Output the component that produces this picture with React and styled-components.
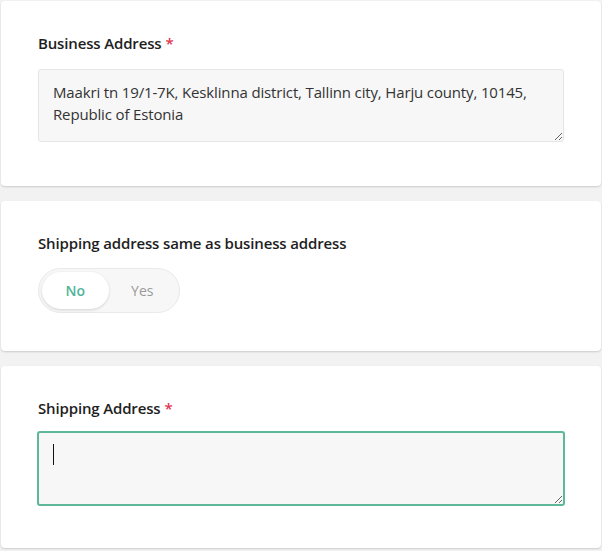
import styled, {createGlobalStyle} from "styled-components";
import {useState} from "react";

const GlobalStyle = createGlobalStyle`
  html, body {
    margin: 0;
    background: #f2f2f2;
  }
  body {
    font-family: "Open Sans", "Noto Sans", sans-serif;
    color: #222;
  }
`;

const Page = styled.div`
  display: flex;
  flex-direction: column;
  gap: 15px;
  padding: 1px 1px 2px 1px;
`;

const Card = styled.section`
  background: #fff;
  border-radius: 4px;
  box-shadow: 0 1px 2px rgba(0, 0, 0, 0.16);
  padding: ${p => p.$pad || "32px 37px 44px 37px"};
`;

const Label = styled.div`
  font-size: 15px;
  font-weight: 600;
  line-height: 20px;
  letter-spacing: -0.15px;
  color: #1e1e1e;
  margin-bottom: ${p => p.$gap || "16px"};
`;

const Star = styled.span`
  color: #e0344f;
  margin-left: 4px;
`;

const Field = styled.div`
  position: relative;
`;

const TextArea = styled.textarea`
  display: block;
  box-sizing: border-box;
  height: ${p => (p.$focused ? "75px" : "73px")};
  margin: ${p => (p.$focused ? "0 -1px" : "0")};
  width: ${p => (p.$focused ? "calc(100% + 2px)" : "100%")};
  background: #f7f7f7;
  border: ${p => (p.$focused ? "2px solid #5cb899" : "1px solid #e5e5e5")};
  border-radius: 3px;
  padding: ${p => (p.$focused ? "10px 14px" : "11px 14px")};
  font-family: "Open Sans", "Noto Sans", sans-serif;
  font-size: 15px;
  line-height: 22px;
  letter-spacing: -0.15px;
  color: #333;
  outline: none;
  resize: vertical;
  caret-color: #111;
`;

const Caret = styled.span`
  position: absolute;
  left: 15px;
  top: 13px;
  width: 1px;
  height: 21px;
  background: #111;
  pointer-events: none;
`;

const Toggle = styled.div`
  display: inline-flex;
  align-items: center;
  box-sizing: border-box;
  width: 142px;
  height: 45px;
  padding: 3px;
  background: #f7f7f7;
  border: 1px solid #e9e9e9;
  border-radius: 23px;
`;

const Option = styled.button`
  box-sizing: border-box;
  height: 37px;
  width: ${p => (p.$active ? "67px" : "68px")};
  border: none;
  border-radius: 19px;
  background: ${p => (p.$active ? "#fff" : "transparent")};
  box-shadow: ${p => (p.$active ? "0 1px 3px rgba(0,0,0,0.15)" : "none")};
  color: ${p => (p.$active ? "#4fb598" : "#9a9a9a")};
  font-family: "Open Sans", "Noto Sans", sans-serif;
  font-size: 14px;
  font-weight: ${p => (p.$active ? 600 : 500)};
  cursor: pointer;
  padding: 0;
`;

const address =
  "Maakri tn 19/1-7K, Kesklinna district, Tallinn city, Harju county, 10145, Republic of Estonia";

const App = () => {
  const [same, setSame] = useState(false);
  const [shipping, setShipping] = useState("");

  return (
    <Page>
      <GlobalStyle/>
      <Card>
        <Label>Business Address<Star>*</Star></Label>
        <TextArea defaultValue={address}/>
      </Card>
      <Card $pad="32px 37px 38px 37px">
        <Label $gap="15px">Shipping address same as business address</Label>
        <Toggle>
          <Option $active={!same} onClick={() => setSame(false)}>No</Option>
          <Option $active={same} onClick={() => setSame(true)}>Yes</Option>
        </Toggle>
      </Card>
      <Card $pad="32px 37px 42px 37px">
        <Label $gap="13px">Shipping Address<Star>*</Star></Label>
        <Field>
          <TextArea
            $focused
            value={shipping}
            onChange={e => setShipping(e.target.value)}
          />
          {shipping === "" && <Caret/>}
        </Field>
      </Card>
    </Page>
  );
};

export default App;
